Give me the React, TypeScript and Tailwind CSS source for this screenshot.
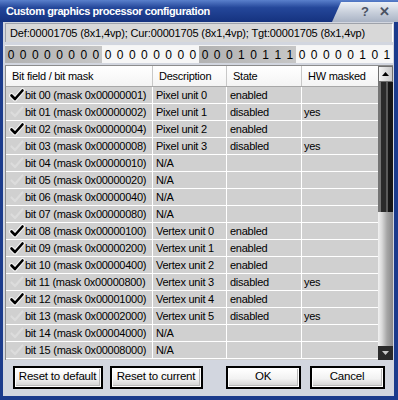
import React from "react";

type Row = {
    bit: string;
    mask: string;
    desc: string;
    state: string;
    hw: string;
    on: boolean;
};

const rows: Row[] = [
    { bit: "00", mask: "00000001", desc: "Pixel unit 0", state: "enabled", hw: "", on: true },
    { bit: "01", mask: "00000002", desc: "Pixel unit 1", state: "disabled", hw: "yes", on: false },
    { bit: "02", mask: "00000004", desc: "Pixel unit 2", state: "enabled", hw: "", on: true },
    { bit: "03", mask: "00000008", desc: "Pixel unit 3", state: "disabled", hw: "yes", on: false },
    { bit: "04", mask: "00000010", desc: "N/A", state: "", hw: "", on: false },
    { bit: "05", mask: "00000020", desc: "N/A", state: "", hw: "", on: false },
    { bit: "06", mask: "00000040", desc: "N/A", state: "", hw: "", on: false },
    { bit: "07", mask: "00000080", desc: "N/A", state: "", hw: "", on: false },
    { bit: "08", mask: "00000100", desc: "Vertex unit 0", state: "enabled", hw: "", on: true },
    { bit: "09", mask: "00000200", desc: "Vertex unit 1", state: "enabled", hw: "", on: true },
    { bit: "10", mask: "00000400", desc: "Vertex unit 2", state: "enabled", hw: "", on: true },
    { bit: "11", mask: "00000800", desc: "Vertex unit 3", state: "disabled", hw: "yes", on: false },
    { bit: "12", mask: "00001000", desc: "Vertex unit 4", state: "enabled", hw: "", on: true },
    { bit: "13", mask: "00002000", desc: "Vertex unit 5", state: "disabled", hw: "yes", on: false },
    { bit: "14", mask: "00004000", desc: "N/A", state: "", hw: "", on: false },
    { bit: "15", mask: "00008000", desc: "N/A", state: "", hw: "", on: false },
];

const bits = "00000000000000000001011100000101".split("");

const Check = ({ on }: { on: boolean }) => (
    <svg width="16" height="14" viewBox="0 0 16 14" className="shrink-0">
        {on ? (
            <>
                <path d="M2.5 7.5 L6 11 L13.5 2.5" fill="none" stroke="#f4f4f4" strokeWidth="4.8" strokeLinecap="round" strokeLinejoin="round" />
                <path d="M2.5 7.5 L6 11 L13.5 2.5" fill="none" stroke="#000000" strokeWidth="2.6" strokeLinecap="round" strokeLinejoin="round" />
            </>
        ) : (
            <path d="M2.5 7.5 L6 11 L13.5 2.5" fill="none" stroke="#dcdcdc" strokeWidth="2.2" strokeLinecap="round" strokeLinejoin="round" />
        )}
    </svg>
);

const Button = ({ label, w }: { label: string; w: string }) => (
    <button className={`${w} h-[23px] shrink-0 border-2 border-black bg-white p-px cursor-default`}>
        <div className="h-full w-full flex items-center justify-center whitespace-nowrap bg-[linear-gradient(to_bottom,#ffffff,#f2f2f2_60%,#d6d6d6)] border-r border-b border-[#b8b8b8] text-[11.5px] tracking-[-0.2px] text-black">
            {label}
        </div>
    </button>
);

export default function App() {
    return (
        <div className="w-[398px] h-[400px] flex flex-col bg-[#1b3b8c] font-['Liberation_Sans',Arial,sans-serif] text-[11px] text-black select-none">
            {/* title bar */}
            <div className="h-[22px] shrink-0 flex items-stretch bg-[linear-gradient(to_bottom,#5a80cc,#24479a_35%,#15327f)]">
                <div className="flex-1 flex items-center pl-[6px] text-white font-bold text-[11px] tracking-[-0.4px] whitespace-nowrap">
                    Custom graphics processor configuration
                </div>
                <div className="w-[66px] mt-[2px] flex items-center justify-end gap-[10px] pr-[8px] pl-[16px] bg-[linear-gradient(to_bottom,#eef1f6,#c9d0dc_50%,#a9b3c4)] [clip-path:polygon(9px_0,100%_0,100%_100%,0_100%)] text-[#4b5262] font-bold text-[13px]">
                    <span>?</span>
                    <span>✕</span>
                </div>
            </div>

            {/* body */}
            <div className="flex-1 ml-[3px] mr-[4px] mb-[4px] bg-[#d2d6df] flex flex-col pl-[2px] pr-px pt-px">
                <div className="h-[19px] shrink-0 flex items-center pl-[4px] whitespace-nowrap tracking-[-0.15px] bg-[#d8d8d8] border-t border-l border-[#9ea2aa] border-r border-r-white">
                    Def:00001705 (8x1,4vp); Cur:00001705 (8x1,4vp); Tgt:00001705 (8x1,4vp)
                </div>

                <div className="mt-[3px] h-[18px] shrink-0 flex border-t border-t-[#f4f4f4] text-[12px]">
                    {[0, 1, 2, 3].map((g) => (
                        <div
                            key={g}
                            className={`flex-1 flex ${
                                g % 2 === 0
                                    ? "bg-[linear-gradient(to_right,#b2b2b2,#c6c6c6)]"
                                    : "bg-[#f6f6f6]"
                            }`}
                        >
                            {bits.slice(g * 8, g * 8 + 8).map((b, i) => (
                                <div key={i} className="flex-1 flex items-center justify-center">
                                    {b}
                                </div>
                            ))}
                        </div>
                    ))}
                </div>

                {/* table */}
                <div className="mt-[2px] h-[295px] shrink-0 flex border-t border-l border-[#8c8c8c] bg-[#d0d0d0] whitespace-nowrap tracking-[-0.25px]">
                    <div className="flex-1 flex flex-col overflow-hidden">
                        <div className="h-[21px] shrink-0 grid grid-cols-[147px_74px_75px_1fr] bg-[linear-gradient(to_bottom,#ffffff,#f4f4f4)] border-b border-[#a8a8a8]">
                            <div className="flex items-center pl-[6px] border-r border-[#c8c8c8]">Bit field / bit mask</div>
                            <div className="flex items-center pl-[6px] border-r border-[#c8c8c8]">Description</div>
                            <div className="flex items-center pl-[6px] border-r border-[#c8c8c8]">State</div>
                            <div className="flex items-center pl-[6px]">HW masked</div>
                        </div>
                        {rows.map((r) => (
                            <div key={r.bit} className="h-[17px] shrink-0 grid grid-cols-[147px_74px_75px_1fr] border-b border-white">
                                <div className="flex items-center pl-[3px] border-r border-white overflow-hidden">
                                    <Check on={r.on} />
                                    <span>
                                        bit {r.bit} (mask 0x{r.mask})
                                    </span>
                                </div>
                                <div className="flex items-center pl-[3px] border-r border-white">{r.desc}</div>
                                <div className="flex items-center pl-[3px] border-r border-white">{r.state}</div>
                                <div className="flex items-center pl-[2px]">{r.hw}</div>
                            </div>
                        ))}
                    </div>

                    {/* scrollbar */}
                    <div className="w-[15px] shrink-0 flex flex-col bg-[#202020]">
                        <div className="h-[16px] flex items-center justify-center bg-[linear-gradient(to_right,#f4f4f4,#c8c8c8)] border border-[#707070]">
                            <svg width="7" height="4" viewBox="0 0 7 4">
                                <path d="M0 4 L3.5 0 L7 4 Z" fill="#000" />
                            </svg>
                        </div>
                        <div className="h-[130px] bg-[linear-gradient(to_right,#747474_0,#747474_3px,#2a2a2a_3px,#2a2a2a_8px,#5a5a5a_8px,#5a5a5a_10px,#161616_10px)]" />
                        <div className="flex-1 bg-[linear-gradient(to_right,#f2f2f2_0,#d8d8d8_4px,#a6a6a6_9px,#888888)]" />
                        <div className="h-[14px] flex items-center justify-center bg-[#2a2a2a]">
                            <svg width="7" height="4" viewBox="0 0 7 4">
                                <path d="M0 0 L7 0 L3.5 4 Z" fill="#c8c8c8" />
                            </svg>
                        </div>
                    </div>
                </div>

                <div className="mt-[6px] flex items-center pl-[8px] pr-[8px]">
                    <Button label="Reset to default" w="w-[90px]" />
                    <div className="w-[7px]" />
                    <Button label="Reset to current" w="w-[93px]" />
                    <div className="flex-1" />
                    <Button label="OK" w="w-[75px]" />
                    <div className="w-[9px]" />
                    <Button label="Cancel" w="w-[75px]" />
                </div>
            </div>
        </div>
    );
}
